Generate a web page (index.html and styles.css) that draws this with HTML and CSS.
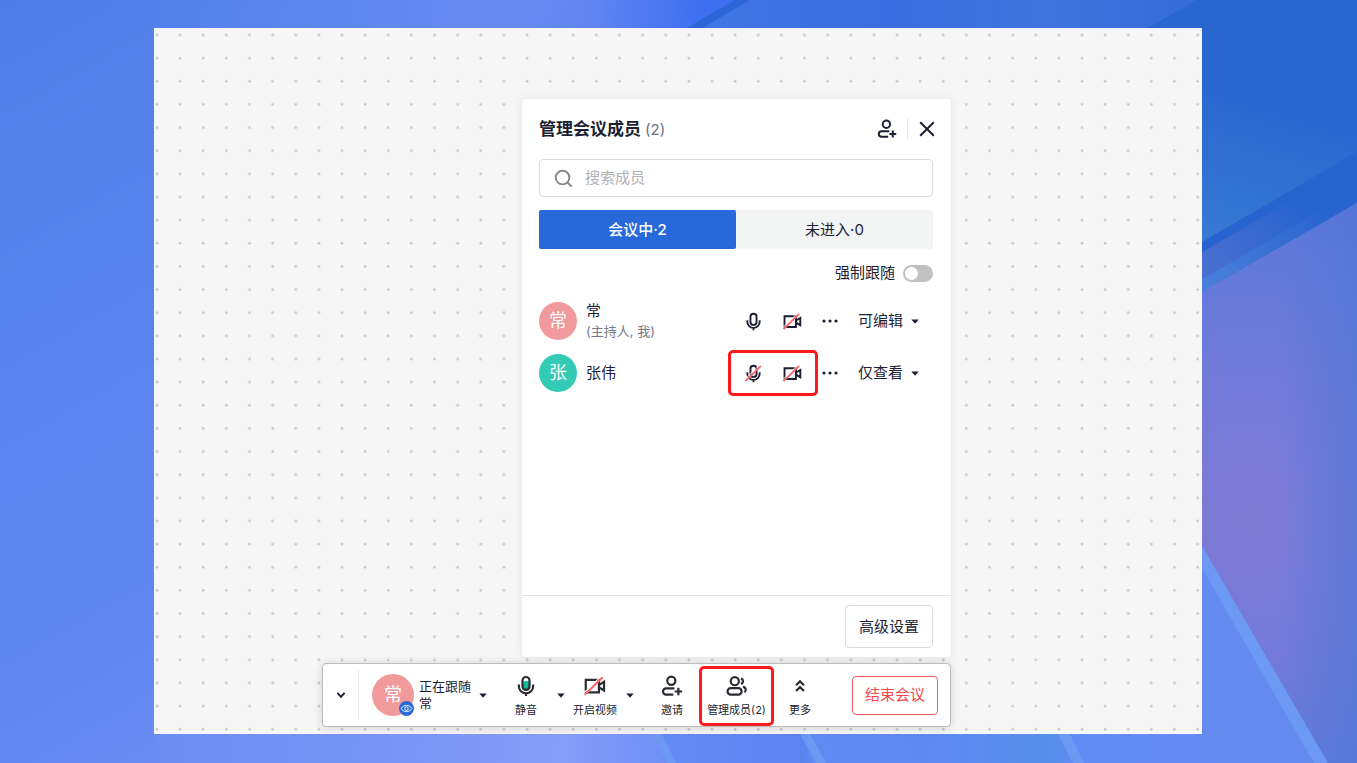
FILE: index.html
```html
<!DOCTYPE html>
<html lang="zh-CN">
<head>
  <meta charset="UTF-8">
  <meta name="viewport" content="width=device-width, initial-scale=1.0">
  <title>管理会议成员</title>
  <link rel="stylesheet" href="styles.css">
</head>
<body>
  <svg class="backdrop" viewBox="0 0 1357 763" preserveAspectRatio="none" aria-hidden="true">
    <defs>
      <linearGradient id="bg-side" gradientUnits="userSpaceOnUse" x1="0" y1="0" x2="400" y2="700">
        <stop offset="0" stop-color="#4e7ce6"/>
        <stop offset="0.1" stop-color="#5380ea"/>
        <stop offset="0.5" stop-color="#5a84f0"/>
        <stop offset="0.82" stop-color="#6288f1"/>
        <stop offset="0.92" stop-color="#6b8df2"/>
      </linearGradient>
      <linearGradient id="bg-lead" gradientUnits="userSpaceOnUse" x1="154" y1="0" x2="744" y2="60">
        <stop offset="0" stop-color="#5380ea"/>
        <stop offset="0.35" stop-color="#5f87f0"/>
        <stop offset="0.6" stop-color="#698bf0"/>
        <stop offset="0.74" stop-color="#6084f2"/>
        <stop offset="0.92" stop-color="#3e6ff0"/>
      </linearGradient>
      <linearGradient id="bg-bottom" gradientUnits="userSpaceOnUse" x1="154" y1="0" x2="680" y2="0">
        <stop offset="0" stop-color="#6b8df2"/>
        <stop offset="0.4" stop-color="#7793f5"/>
        <stop offset="0.78" stop-color="#869dfa"/>
        <stop offset="1" stop-color="#6c8df5"/>
      </linearGradient>
      <linearGradient id="bg-top" x1="0" y1="0" x2="1" y2="0">
        <stop offset="0" stop-color="#4276e4"/>
        <stop offset="0.4" stop-color="#3a6ee0"/>
        <stop offset="0.7" stop-color="#3f75de"/>
        <stop offset="1" stop-color="#356bd8"/>
      </linearGradient>
      <linearGradient id="bg-blue" gradientUnits="userSpaceOnUse" x1="1195" y1="245" x2="1240" y2="95">
        <stop offset="0" stop-color="#387bd3"/>
        <stop offset="1" stop-color="#2a66d0"/>
      </linearGradient>
      <linearGradient id="bg-mauve" gradientUnits="userSpaceOnUse" x1="1202" y1="270" x2="1300" y2="205">
        <stop offset="0" stop-color="#4a70cf"/>
        <stop offset="1" stop-color="#2864cf"/>
      </linearGradient>
      <linearGradient id="bg-edge" gradientUnits="userSpaceOnUse" x1="1202" y1="285" x2="1330" y2="215">
        <stop offset="0" stop-color="#4a80da"/>
        <stop offset="1" stop-color="#2864cf"/>
      </linearGradient>
      <radialGradient id="bg-purple" gradientUnits="userSpaceOnUse" cx="1250" cy="520" r="330">
        <stop offset="0" stop-color="#7f7bd5"/>
        <stop offset="0.4" stop-color="#747ad8"/>
        <stop offset="0.75" stop-color="#647adb"/>
        <stop offset="1" stop-color="#5a74d6"/>
      </radialGradient>
      <linearGradient id="bg-fade" x1="0" y1="0" x2="1" y2="0">
        <stop offset="0.5" stop-color="#5077d6" stop-opacity="0"/>
        <stop offset="1" stop-color="#5077d6" stop-opacity="0.6"/>
      </linearGradient>
      <linearGradient id="bg-low" gradientUnits="userSpaceOnUse" x1="660" y1="0" x2="1250" y2="0">
        <stop offset="0" stop-color="#648bf6"/>
        <stop offset="0.24" stop-color="#5c83f0"/>
        <stop offset="0.26" stop-color="#618af4"/>
        <stop offset="0.45" stop-color="#5f89f2"/>
        <stop offset="0.66" stop-color="#558fe9"/>
        <stop offset="0.7" stop-color="#618cf6"/>
        <stop offset="1" stop-color="#668bf0"/>
      </linearGradient>
    </defs>
    <rect width="1357" height="763" fill="url(#bg-side)"/>
    <rect x="154" width="620" height="40" fill="url(#bg-lead)"/>
    <rect x="154" y="725" width="530" height="38" fill="url(#bg-bottom)"/>
    <path d="M750 0H1195L1140 32H695Z" fill="url(#bg-top)"/>
    <path d="M735 0H750L702 28H687Z" fill="#2c66d6"/>
    <path d="M1195 0H1357V203L1202 292V28H1147Z" fill="url(#bg-blue)"/>
    <path d="M1202 242L1357 152V203L1202 292Z" fill="#2864cf"/>
    <path d="M1202 252L1320 184V211L1202 279Z" fill="url(#bg-mauve)"/>
    <path d="M1202 279L1330 205V219L1202 292Z" fill="url(#bg-edge)"/>
    <path d="M1202 292L1357 203V763H1202Z" fill="url(#bg-purple)"/>
    <path d="M1202 292L1357 203V763H1202Z" fill="url(#bg-fade)"/>
    <path d="M654 730H1202V560L1314 763H671Z" fill="url(#bg-low)"/>
    <g fill="#6c99f4">
      <path d="M1202 546L1328 763H1314L1202 568Z"/>
      <path d="M650 730H660L676 763H667Z"/>
      <path d="M798 730H808L826 763H816Z"/>
      <path d="M1056 730H1068L1084 763H1073Z"/>
    </g>
  </svg>

  <!-- shared icons -->
  <svg class="sprite" aria-hidden="true">
    <symbol id="icon-mic" viewBox="0 0 20 20">
      <rect class="mic-level" x="7" y="5.5" width="6" height="7.6" rx="2.6"/>
      <rect x="6.8" y="1.8" width="6.4" height="11.8" rx="3.2"/>
      <path d="M3.5 8.6v1.6a6.5 6.5 0 0 0 13 0V8.6M10 16.6v2.6"/>
    </symbol>
    <symbol id="icon-camera" viewBox="0 0 20 20">
      <path d="M13.6 4.4H1.6v11.4h12zM13.8 9l4.4-2.8v7.8l-4.4-2.8z"/>
    </symbol>
    <symbol id="icon-invite" viewBox="0 0 20 20">
      <circle cx="9.4" cy="5.2" r="3.7"/>
      <path d="M12.2 12.2H4.6a2.8 2.8 0 0 0 0 5.6h6.6M15.8 11.6v6.8M12.4 15h6.8"/>
    </symbol>
    <symbol id="icon-caret" viewBox="0 0 8 5">
      <path d="M.3.5h7.4L4 4.8z"/>
    </symbol>
  </svg>

  <main class="board">
    <section class="panel">
      <header class="panel-header">
        <h1 class="panel-title">管理会议成员 <span class="count">(2)</span></h1>
        <button class="icon-btn" type="button" aria-label="邀请">
          <svg class="icon"><use href="#icon-invite"/></svg>
        </button>
        <span class="header-line"></span>
        <button class="icon-btn" type="button" aria-label="关闭">
          <svg class="icon" viewBox="0 0 20 20"><path d="M3.2 3.2l13.6 13.6M16.8 3.2L3.2 16.8"/></svg>
        </button>
      </header>

      <label class="search">
        <svg class="icon search-icon" viewBox="0 0 20 20"><circle cx="9" cy="9" r="7.2"/><path d="M14.2 14.2l4.4 4.4"/></svg>
        <input class="search-input" type="text" placeholder="搜索成员" aria-label="搜索成员">
      </label>

      <div class="tabs">
        <button class="tab active" type="button">会议中·2</button>
        <button class="tab" type="button">未进入·0</button>
      </div>

      <div class="follow">
        <label for="follow-toggle">强制跟随</label>
        <input class="toggle" type="checkbox" id="follow-toggle">
      </div>

      <ul class="members">
        <li class="member">
          <span class="avatar pink">常</span>
          <div class="member-name">常<span class="member-role">(主持人, 我)</span></div>
          <div class="media">
            <button class="media-btn" type="button" aria-label="静音">
              <svg class="icon"><use href="#icon-mic"/></svg>
            </button>
            <button class="media-btn" type="button" aria-label="开启视频">
              <svg class="icon" viewBox="0 0 20 20"><use href="#icon-camera"/><path class="slash-gap" d="M-.2 16.4L15.2 1.4"/><path class="slash" d="M.6 18L17 2"/></svg>
            </button>
          </div>
          <button class="dots-btn" type="button" aria-label="更多">
            <svg class="dots" viewBox="0 0 16 4"><circle cx="2" cy="2" r="1.6"/><circle cx="8" cy="2" r="1.6"/><circle cx="14" cy="2" r="1.6"/></svg>
          </button>
          <div class="role">
            <select class="role-select" aria-label="常的权限">
              <option>可编辑</option>
              <option>仅查看</option>
            </select>
            <svg class="caret"><use href="#icon-caret"/></svg>
          </div>
        </li>
        <li class="member">
          <span class="avatar green">张</span>
          <div class="member-name">张伟</div>
          <div class="media marked">
            <button class="media-btn" type="button" aria-label="解除静音">
              <svg class="icon" viewBox="0 0 20 20"><use href="#icon-mic"/><path class="slash-gap" d="M.6 16.4L16 1.4"/><path class="slash" d="M1.4 18L17.8 2"/></svg>
            </button>
            <button class="media-btn" type="button" aria-label="开启视频">
              <svg class="icon" viewBox="0 0 20 20"><use href="#icon-camera"/><path class="slash-gap" d="M-.2 16.4L15.2 1.4"/><path class="slash" d="M.6 18L17 2"/></svg>
            </button>
          </div>
          <button class="dots-btn" type="button" aria-label="更多">
            <svg class="dots" viewBox="0 0 16 4"><circle cx="2" cy="2" r="1.6"/><circle cx="8" cy="2" r="1.6"/><circle cx="14" cy="2" r="1.6"/></svg>
          </button>
          <div class="role">
            <select class="role-select" aria-label="张伟的权限">
              <option>仅查看</option>
              <option>可编辑</option>
            </select>
            <svg class="caret"><use href="#icon-caret"/></svg>
          </div>
        </li>
      </ul>

      <footer class="panel-footer">
        <button class="settings-btn" type="button">高级设置</button>
      </footer>
    </section>

    <nav class="toolbar">
      <button class="collapse-btn" type="button" aria-label="收起">
        <svg class="chevron" viewBox="0 0 10 10"><path d="M1.4 2.8L5 6.8l3.6-4"/></svg>
      </button>
      <div class="following">
        <span class="avatar large pink">常
          <span class="eye">
            <svg viewBox="0 0 14 14"><path d="M1.2 7C3.6 2.6 10.4 2.6 12.8 7 10.4 11.4 3.6 11.4 1.2 7z"/><circle cx="7" cy="7" r="1.9"/></svg>
          </span>
        </span>
        <div class="following-text">正在跟随<br>常</div>
        <button class="caret-btn" type="button" aria-label="跟随选项"><svg class="caret"><use href="#icon-caret"/></svg></button>
      </div>

      <button class="tool" type="button">
        <svg class="icon tool-icon mic-on"><use href="#icon-mic"/></svg>
        <span>静音</span>
      </button>
      <button class="caret-btn" type="button" aria-label="麦克风选项"><svg class="caret"><use href="#icon-caret"/></svg></button>
      <button class="tool" type="button">
        <svg class="icon tool-icon" viewBox="0 0 20 20"><use href="#icon-camera"/><path class="slash-gap" d="M-.2 16.4L15.2 1.4"/><path class="slash" d="M.6 18L17 2"/></svg>
        <span>开启视频</span>
      </button>
      <button class="caret-btn" type="button" aria-label="视频选项"><svg class="caret"><use href="#icon-caret"/></svg></button>
      <button class="tool invite" type="button">
        <svg class="icon tool-icon"><use href="#icon-invite"/></svg>
        <span>邀请</span>
      </button>
      <button class="tool manage marked" type="button">
        <svg class="icon tool-icon" viewBox="0 0 20 20"><circle cx="8" cy="5.6" r="3.7"/><rect x="1.4" y="12" width="12.8" height="5.8" rx="2.9"/><path d="M13.6 3.2a2.5 2.5 0 0 1 0 4.8M15.4 10.8c3 .4 3.2 3.8 1.4 5"/></svg>
        <span>管理成员(2)</span>
      </button>
      <button class="tool" type="button">
        <svg class="icon tool-icon" viewBox="0 0 20 20"><path d="M6.4 9.4L10 5.8l3.6 3.6M6.4 14.6L10 11l3.6 3.6"/></svg>
        <span>更多</span>
      </button>
      <button class="end-btn" type="button">结束会议</button>
    </nav>
  </main>
</body>
</html>
```
FILE: styles.css
```css
* {
  box-sizing: border-box;
}

body {
  margin: 0;
  min-height: 100vh;
  padding: 28px 155px 29px 154px;
  display: flex;
  font-family: Inter, "Noto Sans CJK SC", sans-serif;
  font-size: 15px;
  line-height: 20px;
  color: #1c1f33;
}

button, input, select {
  font: inherit;
  color: inherit;
}

button {
  padding: 0;
  border: none;
  background: none;
  cursor: pointer;
}

.backdrop {
  position: absolute;
  top: 0;
  left: 0;
  width: 100%;
  height: 100%;
  z-index: -1;
}

.sprite {
  position: absolute;
  width: 0;
  height: 0;
}

.board {
  flex: 1;
  display: flex;
  flex-direction: column;
  align-items: flex-end;
  gap: 6px;
  padding: 71px 251px 7px 0;
  background-color: #f6f6f6;
  background-image: radial-gradient(circle at 3px 7px, #b4b4b4 0, #f6f6f6 2px);
  background-size: calc(100% / 45.3) calc(100% / 30.5);
}

/* icons */
.icon {
  width: 20px;
  height: 20px;
  fill: none;
  stroke: #1c1f33;
  stroke-width: 2;
}

.slash {
  stroke: #f8686c;
  stroke-width: 2;
}

.slash-gap {
  stroke: #fff;
  stroke-width: 1;
}

.mic-level {
  fill: var(--mic-level, none);
  stroke: none;
}

.caret {
  width: 8px;
  height: 5px;
  fill: #1c1f33;
}

/* members panel */
.panel {
  flex: 1;
  width: 429px;
  display: flex;
  flex-direction: column;
  padding-top: 18px;
  background: #fff;
  border-radius: 4px;
  box-shadow: 0 0 10px rgba(0, 0, 0, 0.08);
}

.panel-header {
  display: flex;
  align-items: center;
  height: 24px;
  margin: 0 14px 18px 17px;
}

.panel-title {
  flex: 1;
  margin: 0;
  font-size: 17px;
  line-height: 24px;
}

.count {
  font-size: 15px;
  font-weight: 400;
  color: #6c6f7c;
}

.icon-btn {
  display: flex;
}

.header-line {
  width: 1px;
  height: 22px;
  margin: 0 9px 0 10px;
  background: #e8e8ea;
}

.search {
  display: flex;
  align-items: center;
  gap: 12px;
  height: 38px;
  margin: 0 18px 13px 17px;
  padding: 0 14px;
  border: 1px solid #d9dadc;
  border-radius: 4px;
}

.search-icon {
  width: 19px;
  height: 19px;
  stroke: #888;
}

.search-input {
  flex: 1;
  min-width: 0;
  padding: 0;
  border: none;
  outline: none;
  background: none;
}

.search-input::placeholder {
  color: #b0b1b6;
}

.tabs {
  display: flex;
  margin: 0 18px 12px 17px;
  background: #f2f4f4;
  border-radius: 2px;
}

.tab {
  flex: 1;
  height: 39px;
  border-radius: 2px;
}

.tab.active {
  background: #2768db;
  color: #fff;
  font-weight: 500;
}

.follow {
  display: flex;
  align-items: center;
  justify-content: flex-end;
  gap: 8px;
  height: 24px;
  margin: 0 18px 10px 17px;
}

.toggle {
  appearance: none;
  width: 30px;
  height: 17px;
  margin: 0;
  padding: 2px;
  border-radius: 9px;
  background: #c1c1c1;
}

.toggle::before {
  content: "";
  display: block;
  width: 13px;
  height: 13px;
  border-radius: 50%;
  background: #fff;
}

.toggle:checked {
  background: #2768db;
}

.toggle:checked::before {
  margin-left: auto;
}

.members {
  flex: 1;
  margin: 0 18px 0 17px;
  padding: 0;
  list-style: none;
}

.member {
  display: flex;
  align-items: center;
  height: 52px;
}

.avatar {
  display: flex;
  align-items: center;
  justify-content: center;
  width: 38px;
  height: 38px;
  border-radius: 50%;
  color: #fff;
  font-size: 18px;
}

.pink {
  background: #f19a9b;
}

.green {
  background: #33cbb5;
}

.member-name {
  flex: 1;
  margin-left: 9px;
}

.member-role {
  display: block;
  font-size: 13px;
  color: #767985;
}

.media {
  position: relative;
  display: flex;
  align-items: center;
  height: 46px;
  padding: 0 6px;
}

.media-btn {
  display: flex;
  justify-content: center;
  width: 39px;
}

.media .icon {
  width: 19px;
  height: 19px;
}

.marked::after {
  content: "";
  position: absolute;
  inset: 0;
  border: 3px solid #ff181c;
  border-radius: 5px;
}

.dots-btn {
  display: flex;
  justify-content: center;
  width: 24px;
  margin-right: 16px;
}

.dots {
  width: 16px;
  height: 4px;
  fill: #1c1f33;
}

.role {
  position: relative;
  width: 75px;
}

.role-select {
  appearance: none;
  width: 100%;
  padding: 0;
  border: none;
  background: none;
}

.role .caret {
  position: absolute;
  top: 8px;
  right: 14px;
  pointer-events: none;
}

.panel-footer {
  display: flex;
  justify-content: flex-end;
  padding: 9px 18px;
  border-top: 1px solid #e3e4e6;
}

.settings-btn {
  width: 88px;
  height: 43px;
  border: 1px solid #d9dadc;
  border-radius: 4px;
}

/* bottom toolbar */
.toolbar {
  display: flex;
  align-items: center;
  width: 629px;
  height: 64px;
  padding-right: 12px;
  background: #fff;
  border: 1px solid #bcbdbd;
  border-radius: 4px;
  box-shadow: 0 1px 10px rgba(0, 0, 0, 0.15);
}

.collapse-btn {
  width: 36px;
  height: 50px;
  border-right: 1px solid #e8e8ea;
}

.chevron {
  width: 10px;
  height: 10px;
  fill: none;
  stroke: #1c1f33;
  stroke-width: 2;
}

.following {
  display: flex;
  align-items: center;
  margin: 0 9px 0 13px;
}

.large {
  position: relative;
  width: 42px;
  height: 42px;
}

.eye {
  position: absolute;
  right: 0;
  bottom: 0;
  display: flex;
  width: 15px;
  height: 15px;
  padding: 1px;
  border-radius: 50%;
  background: #2768db;
}

.eye svg {
  fill: none;
  stroke: #fff;
  stroke-width: 1;
}

.following-text {
  width: 52px;
  margin-left: 5px;
  font-size: 13px;
  line-height: 17px;
}

.caret-btn {
  display: flex;
  justify-content: center;
  width: 23px;
}

.tool {
  display: flex;
  flex-direction: column;
  align-items: center;
  gap: 5px;
  width: 46px;
  padding-top: 3px;
  font-size: 11px;
  line-height: 16px;
  white-space: nowrap;
}

.tool-icon {
  width: 22px;
  height: 22px;
  stroke: #2b2c33;
}

.mic-on {
  --mic-level: #16b99a;
}

.invite {
  margin: 0 4px 0 8px;
}

.manage {
  position: relative;
  width: 75px;
  height: 60px;
  justify-content: center;
  margin-right: 3px;
}

.manage::after {
  inset: 1px 0 -1px;
}

.end-btn {
  width: 86px;
  height: 39px;
  margin-left: auto;
  border: 1px solid #f5575c;
  border-radius: 4px;
  color: #f5484e;
}
```
